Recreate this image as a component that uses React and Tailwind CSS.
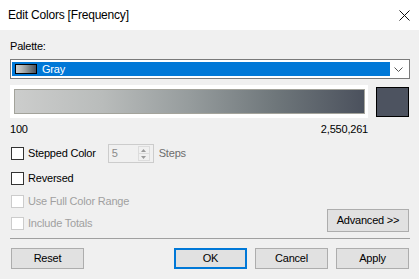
import React from "react";

const grad = "bg-[linear-gradient(to_right,#cccdcc_0%,#b9bcbb_25%,#969c9d_50%,#6e767a_75%,#4b515d_100%)]";

function Check({ label, disabled }) {
  return (
    <div className="flex items-center h-[13px]">
      <div className={`w-[13px] h-[13px] ml-[1px] bg-white border ${disabled ? "border-[#cccccc]" : "border-[#333333]"}`} />
      <span className={`ml-[4px] ${disabled ? "text-[#a0a0a0]" : "text-black"}`}>{label}</span>
    </div>
  );
}

function Btn({ children, primary, className = "" }) {
  return (
    <button
      className={`h-[21px] w-[73px] bg-[#e1e1e1] text-black flex items-center justify-center ${
        primary ? "border-2 border-[#0078d7]" : "border border-[#adadad]"
      } ${className}`}
    >
      {children}
    </button>
  );
}

export default function App() {
  return (
    <div
      className="w-[419px] h-[279px] bg-[#f0f0f0] flex flex-col text-[11px] leading-[13px] tracking-[-0.2px] text-black overflow-hidden"
      style={{ fontFamily: '"Liberation Sans", Arial, sans-serif' }}
    >
      <div className="h-[30px] bg-white flex items-center justify-between pl-[8px] pr-[9px] shrink-0">
        <span className="text-[12px]">Edit Colors [Frequency]</span>
        <svg width="11" height="11" viewBox="0 0 11 11">
          <path d="M0.5 0.5L10.5 10.5M10.5 0.5L0.5 10.5" stroke="#111" strokeWidth="1" />
        </svg>
      </div>

      <div className="px-[10px] flex flex-col">
        <div className="mt-[10px] h-[13px]">Palette:</div>

        <div className="mt-[6px] h-[20px] w-[400px] border border-[#7a7a7a] bg-white flex items-center p-[2px] pl-[1px]">
          <div className="flex-1 h-[14px] bg-[#0078d7] flex items-center">
            <div className={`ml-[3px] w-[22px] h-[10px] border border-black ${grad}`} />
            <span className="ml-[5px] text-white">Gray</span>
          </div>
          <div className="w-[17px] flex justify-center">
            <svg width="9" height="5" viewBox="0 0 9 5">
              <path d="M0.5 0.5L4.5 4.5L8.5 0.5" stroke="#555" fill="none" strokeWidth="1" />
            </svg>
          </div>
        </div>

        <div className="mt-[6px] flex items-start">
          <div className="w-[358px] h-[33px] bg-white pt-[4px] pl-[4px] pr-[3px] pb-[4px]">
            <div className={`w-full h-full border border-[#a3a39b] ${grad}`} />
          </div>
          <div className="ml-[8px] mt-[2px] w-[33px] h-[30px] border border-black bg-[#4d5360]" />
        </div>

        <div className="mt-[5px] w-[358px] flex justify-between h-[13px]">
          <span>100</span>
          <span>2,550,261</span>
        </div>

        <div className="mt-[8px] h-[19px] flex items-center">
          <Check label="Stepped Color" />
          <div className="ml-[12px] w-[46px] h-[19px] border border-[#cccccc] bg-[#f0f0f0] flex items-center">
            <span className="ml-[3px] flex-1 text-[#8a8a8a]">5</span>
            <div className="w-[12px] h-[15px] mr-[3px] flex flex-col border border-[#dcdcdc] bg-[#f0f0f0]">
              <div className="flex-1 flex items-center justify-center border-b border-[#dcdcdc]">
                <svg width="5" height="3" viewBox="0 0 5 3"><path d="M2.5 0L5 3H0Z" fill="#9a9a9a" /></svg>
              </div>
              <div className="flex-1 flex items-center justify-center">
                <svg width="5" height="3" viewBox="0 0 5 3"><path d="M0 0H5L2.5 3Z" fill="#9a9a9a" /></svg>
              </div>
            </div>
          </div>
          <span className="ml-[5px] text-[#6d6d6d]">Steps</span>
        </div>

        <div className="mt-[9px]">
          <Check label="Reversed" />
        </div>

        <div className="mt-[10px] flex items-start justify-between">
          <div className="flex flex-col">
            <Check label="Use Full Color Range" disabled />
            <div className="mt-[9px]">
              <Check label="Include Totals" disabled />
            </div>
          </div>
          <button className="mt-[14px] w-[82px] h-[23px] bg-[#e1e1e1] border border-[#adadad] flex items-center justify-center">
            Advanced &gt;&gt;
          </button>
        </div>

        <div className="mt-[6px] h-px w-[400px] bg-[#a0a0a0]" />

        <div className="mt-[9px] flex items-center">
          <Btn className="ml-[1px]">Reset</Btn>
          <Btn primary className="ml-[90px]">OK</Btn>
          <Btn className="ml-[8px]">Cancel</Btn>
          <Btn className="ml-[8px]">Apply</Btn>
        </div>
      </div>
    </div>
  );
}
